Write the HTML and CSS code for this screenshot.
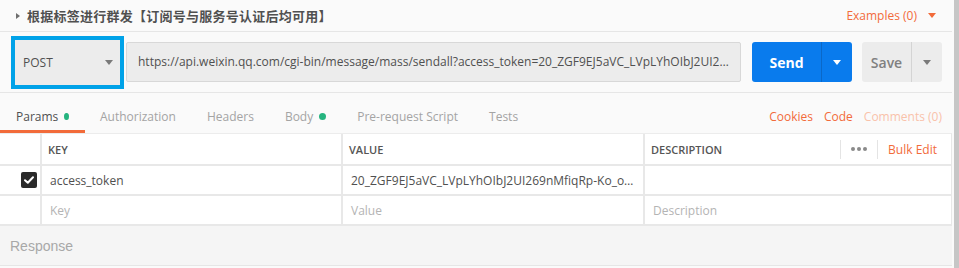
FILE: index.html
```html
<!DOCTYPE html>
<html lang="zh">
<head>
<meta charset="utf-8">
<title>Postman request</title>
<link rel="stylesheet" href="styles.css">
</head>
<body>
<div class="page">
  <main class="main">
    <div class="title-row">
      <span class="caret-right"></span>
      <span class="title">根据标签进行群发【订阅号与服务号认证后均可用】</span>
      <span class="examples">Examples (0) <span class="caret-down orange"></span></span>
    </div>

    <div class="request-row">
      <div class="method-frame">
        <div class="method">
          <span>POST</span>
          <span class="caret-down gray"></span>
        </div>
      </div>
      <div class="url">https://api.weixin.qq.com/cgi-bin/message/mass/sendall?access_token=20_ZGF9EJ5aVC_LVpLYhOIbJ2UI2…</div>
      <div class="send">
        <span class="send-main">Send</span>
        <span class="send-arrow"><span class="caret-down white"></span></span>
      </div>
      <div class="save">
        <span class="save-main">Save</span>
        <span class="save-arrow"><span class="caret-down gray"></span></span>
      </div>
    </div>

    <div class="tabs-row">
      <div class="tabs">
        <span class="tab active">Params <span class="dot"></span></span>
        <span class="tab">Authorization</span>
        <span class="tab">Headers</span>
        <span class="tab">Body <span class="dot"></span></span>
        <span class="tab">Pre-request Script</span>
        <span class="tab">Tests</span>
      </div>
      <div class="links">
        <span class="link">Cookies</span>
        <span class="link">Code</span>
        <span class="link faint">Comments (0)</span>
      </div>
    </div>

    <div class="params">
      <div class="cell head"></div>
      <div class="cell head">KEY</div>
      <div class="cell head">VALUE</div>
      <div class="cell head desc-head">
        <span>DESCRIPTION</span>
        <span class="head-tools">
          <span class="vsep"></span>
          <span class="dots"><i></i><i></i><i></i></span>
          <span class="vsep"></span>
          <span class="bulk">Bulk Edit</span>
        </span>
      </div>

      <div class="cell check-cell"><span class="checkbox"><svg width="10" height="8" viewBox="0 0 10 8"><path d="M1 4.2 L3.8 6.8 L9 1.2" fill="none" stroke="#fff" stroke-width="2" stroke-linecap="round" stroke-linejoin="round"/></svg></span></div>
      <div class="cell body">access_token</div>
      <div class="cell body">20_ZGF9EJ5aVC_LVpLYhOIbJ2UI269nMfiqRp-Ko_o…</div>
      <div class="cell body"></div>

      <div class="cell"></div>
      <div class="cell body placeholder">Key</div>
      <div class="cell body placeholder">Value</div>
      <div class="cell body placeholder">Description</div>
    </div>

    <div class="response">Response</div>
  </main>
  <div class="scrollbar"></div>
</div>
</body>
</html>
```
FILE: styles.css
```css
html, body {
  margin: 0;
  padding: 0;
  background: #fafafa;
}
body {
  font-family: "Open Sans", "Noto Sans CJK SC", sans-serif;
  color: #505050;
  font-size: 12px;
}
.page {
  display: flex;
  gap: 2px;
  width: 959px;
  height: 268px;
  overflow: hidden;
}
.main {
  width: 952px;
  flex: none;
}
.scrollbar {
  width: 5px;
  flex: none;
  background: #c6c6c6;
}

/* title row */
.title-row {
  display: flex;
  align-items: center;
  height: 31px;
  padding: 0 16px;
  border-bottom: 1px solid #e6e6e6;
}
.caret-right {
  width: 0;
  height: 0;
  border-left: 4px solid #6e6e6e;
  border-top: 3.5px solid transparent;
  border-bottom: 3.5px solid transparent;
  margin-right: 7px;
}
.title {
  font-family: "Noto Sans CJK SC", sans-serif;
  font-weight: 700;
  font-size: 13px;
  letter-spacing: 0.25px;
  color: #505050;
}
.examples {
  margin-left: auto;
  color: #f26b3a;
  display: flex;
  align-items: center;
  gap: 11px;
}
.caret-down {
  display: inline-block;
  width: 0;
  height: 0;
  border-top: 5px solid #808080;
  border-left: 4px solid transparent;
  border-right: 4px solid transparent;
}
.caret-down.orange { border-top-color: #f26b3a; }
.caret-down.white { border-top-color: #fff; }
.caret-down.gray { border-top-color: #7a7a7a; }

/* request row */
.request-row {
  display: flex;
  align-items: center;
  height: 40px;
  padding: 10px 10px 10px 11px;
  border-bottom: 1px solid #e6e6e6;
}
.method-frame {
  border: 4px solid #00a2e8;
  margin: -6px 2px -7px 0;
  width: 105px;
  height: 45px;
  flex: none;
}
.method {
  box-sizing: border-box;
  height: 100%;
  background: #ececec;
  display: flex;
  align-items: center;
  justify-content: space-between;
  padding: 0 7px 0 8px;
  font-size: 12px;
  color: #505050;
}
.url {
  flex: 1;
  box-sizing: border-box;
  height: 40px;
  line-height: 38px;
  background: #ececec;
  border: 1px solid #d8d8d8;
  border-radius: 2px;
  padding: 0 11px;
  white-space: nowrap;
  overflow: hidden;
  color: #505050;
  margin-right: 11px;
}
.send {
  display: flex;
  width: 100px;
  height: 40px;
  background: #097bed;
  border-radius: 3px;
  color: #fff;
  flex: none;
  margin-right: 10px;
}
.send-main {
  width: 69px;
  display: flex;
  align-items: center;
  justify-content: center;
  font-weight: 700;
  font-size: 14px;
}
.send-arrow {
  flex: 1;
  border-left: 1px solid #0a68c8;
  display: flex;
  align-items: center;
  justify-content: center;
}
.save {
  display: flex;
  width: 80px;
  height: 40px;
  background: #ececec;
  border-radius: 3px;
  color: #808080;
  flex: none;
}
.save-main {
  width: 49px;
  display: flex;
  align-items: center;
  justify-content: center;
  font-weight: 600;
  font-size: 14px;
}
.save-arrow {
  flex: 1;
  border-left: 1px solid #d4d4d4;
  display: flex;
  align-items: center;
  justify-content: center;
}

/* tabs */
.tabs-row {
  display: flex;
  align-items: stretch;
  height: 40px;
  padding-right: 10px;
}
.tabs {
  display: flex;
}
.tab {
  display: flex;
  align-items: center;
  padding: 9px 16px 0 16px;
  color: #a4a4a4;
  box-sizing: border-box;
  border-bottom: 3px solid transparent;
  margin-right: -1px;
}
.tab.active {
  color: #505050;
  border-bottom-color: #f26b3a;
  width: 85px;
}
.dot {
  display: inline-block;
  width: 7px;
  height: 7px;
  border-radius: 50%;
  background: #26b47f;
  margin-left: 6px;
}
.links {
  margin-left: auto;
  display: flex;
  align-items: center;
  gap: 11px;
  padding-top: 7px;
}
.link { color: #f26b3a; }
.link.faint { color: #f9c2aa; }

/* params table */
.params {
  display: grid;
  grid-template-columns: 40px 299px 300px 306px;
  grid-template-rows: 30px 28px 28px;
  gap: 2px;
  background: #e8e8e8;
  border-top: 1px solid #ececec;
  border-bottom: 2px solid #e8e8e8;
  border-right: 1px solid #e8e8e8;
}
.cell {
  background: #fff;
  display: flex;
  align-items: center;
  white-space: nowrap;
  overflow: hidden;
}
.cell.head {
  font-size: 11px;
  font-weight: 600;
  color: #555;
  padding-left: 6px;
}
.cell.body {
  padding-left: 8px;
  color: #505050;
}
.cell.placeholder { color: #b4b4b4; }
.desc-head {
  padding-right: 14px;
}
.head-tools {
  margin-left: auto;
  display: flex;
  align-items: center;
  font-weight: 400;
  font-size: 12px;
}
.vsep {
  width: 1px;
  height: 19px;
  background: #e4e4e4;
}
.dots {
  display: flex;
  gap: 2px;
  margin: 0 10px;
}
.dots i {
  width: 4px;
  height: 4px;
  border-radius: 50%;
  background: #8a8a8a;
}
.bulk {
  color: #f26b3a;
  margin-left: 10px;
}
.check-cell {
  justify-content: flex-end;
  padding-right: 3px;
}
.checkbox {
  width: 16px;
  height: 16px;
  border-radius: 2px;
  background: #2a2a2a;
  display: flex;
  align-items: center;
  justify-content: center;
}

/* response */
.response {
  height: 39px;
  background: #f5f5f5;
  border-bottom: 1px solid #e6e6e6;
  display: flex;
  align-items: center;
  padding-left: 10px;
  font-family: "Liberation Sans", Arial, sans-serif;
  font-size: 14px;
  color: #a8a8a8;
}
```
